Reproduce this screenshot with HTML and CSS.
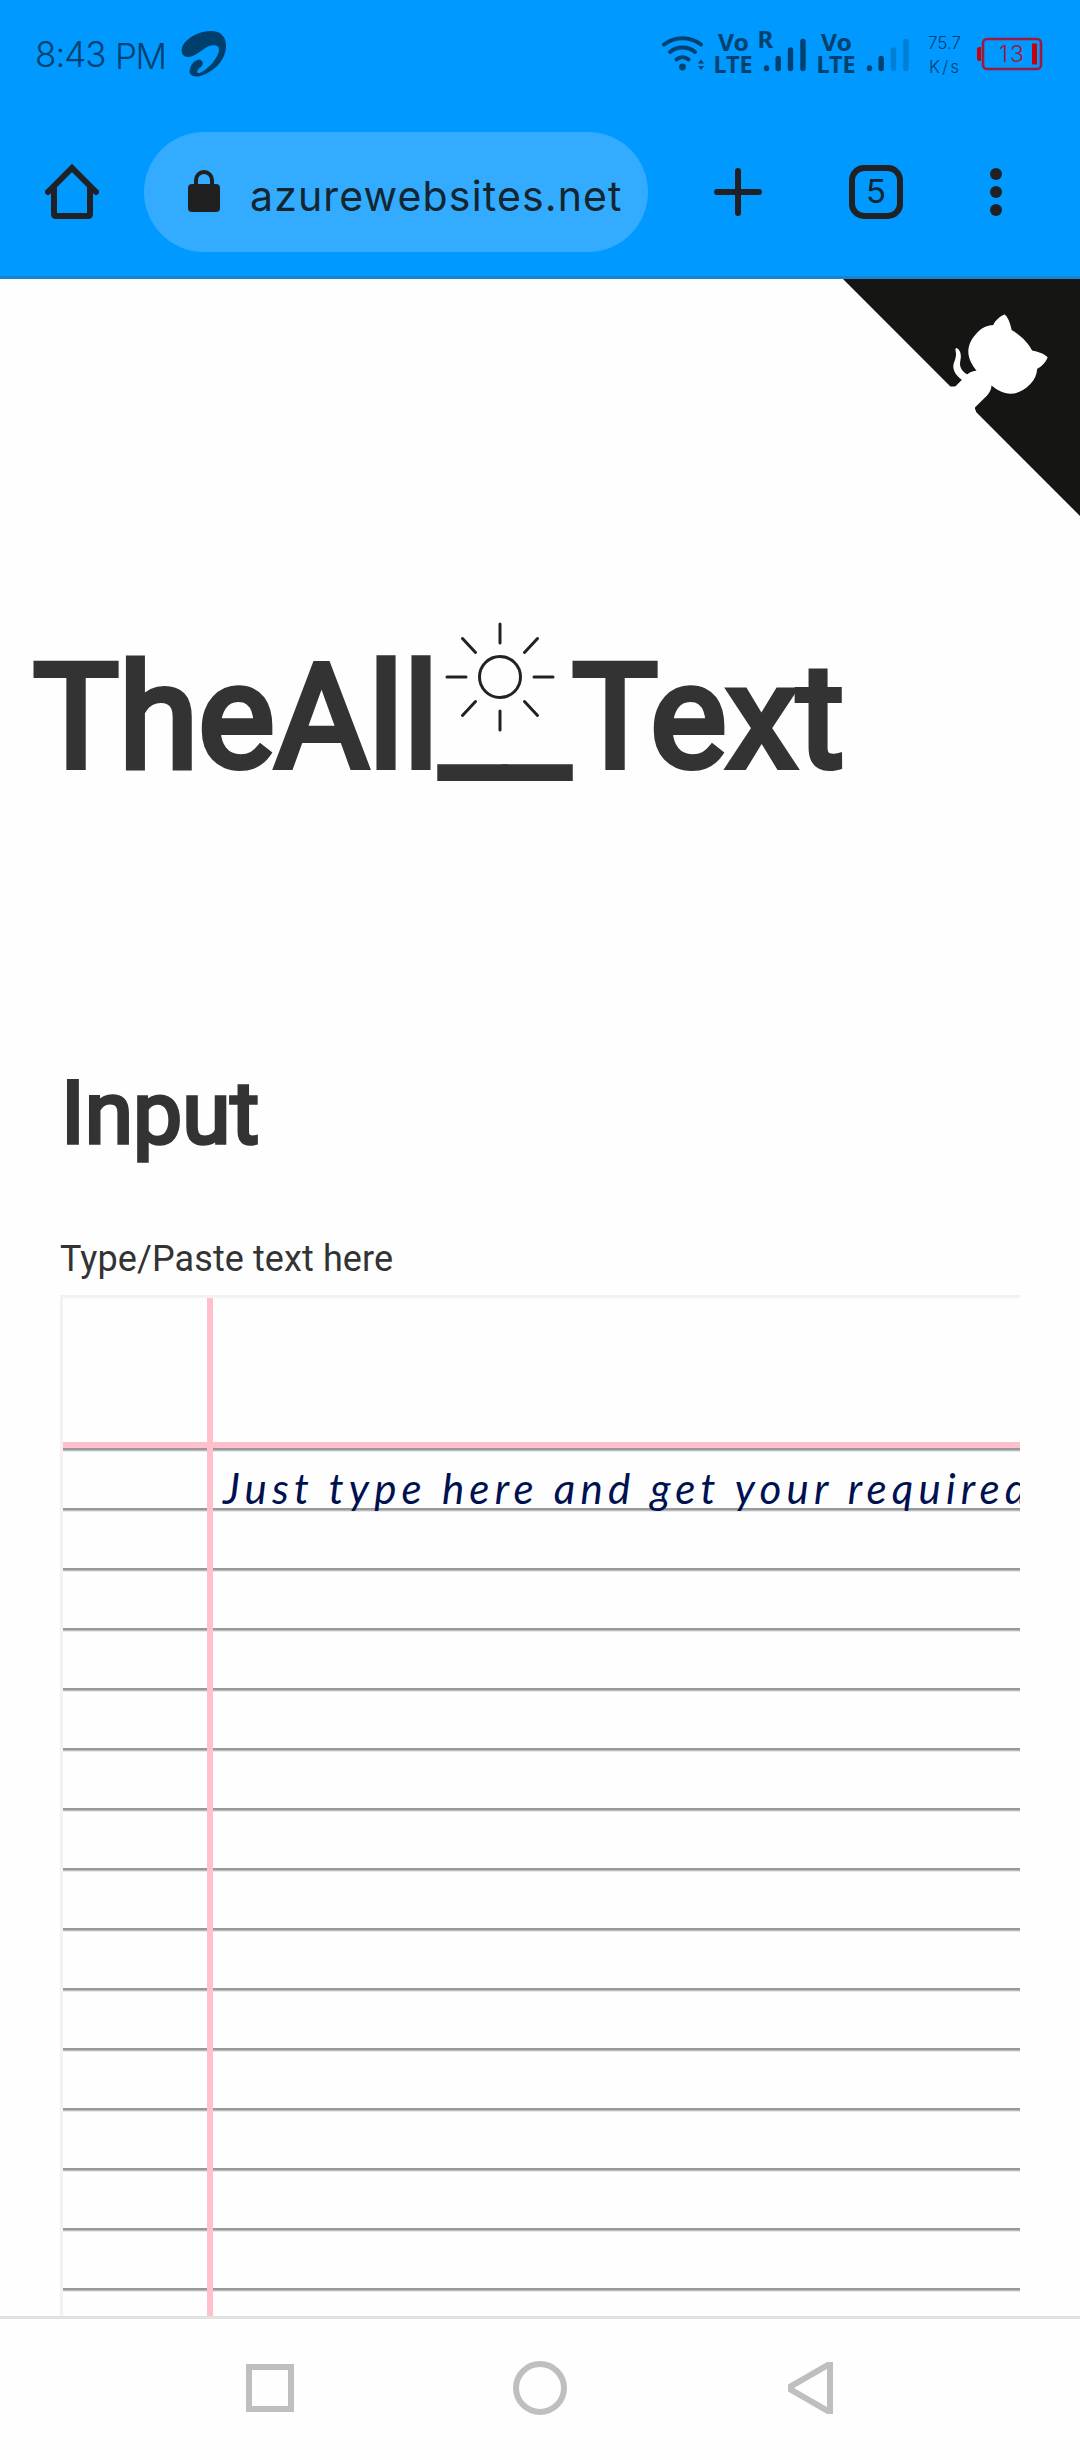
FILE: index.html
```html
<!DOCTYPE html>
<html lang="en">
<head>
<meta charset="utf-8">
<title>TheAll__Text</title>
<link rel="stylesheet" href="styles.css">
</head>
<body>
<div class="phone">
  <header class="top">
    <div class="status">
      <span class="time">8:43</span><span class="meridiem">PM</span>
      <svg class="carrier" width="48" height="50" viewBox="180 30 48 50"><path d="M188 57C182 57 180 51 183 45C188 37 200 31 211 31C221 31 226 37 226 46C226 60 214 72 200 76C193 78 188 74 190 69C191 64 195 60 199 59.500C203 60 204 64 201 67C198 69 196 72 198 73C203 74 218 60 219 50C219 44 213 45 209 46C201 50 195 57 188 57Z"/></svg>
      <svg class="indicators" width="390" height="70" viewBox="660 20 390 70">
        <g class="wave">
          <path d="M664 44.500C675 36 690 36 701 44.500M670 52C677 46 688 46 695 52M676.500 59.500C680 56.500 685 56.500 688.500 59.500"/>
        </g>
        <circle cx="682.500" cy="67" r="3.400"/>
        <path d="M698 63.500L701 59.500L704 63.500ZM698 66L701 70L704 66Z"/>
        <g class="volte">
          <text x="718" y="51" textLength="31" lengthAdjust="spacingAndGlyphs">Vo</text>
          <text x="713.500" y="73" textLength="39" lengthAdjust="spacingAndGlyphs">LTE</text>
          <text x="821" y="51" textLength="31" lengthAdjust="spacingAndGlyphs">Vo</text>
          <text x="816.500" y="73" textLength="39" lengthAdjust="spacingAndGlyphs">LTE</text>
          <text x="757.500" y="48">R</text>
        </g>
        <g class="bars">
          <path d="M766.500 68v.5M778.200 58.500v10M790.500 50v18.500M803 41.500v27M869.500 68v.5M881.200 58.500v10"/>
          <path class="weak" d="M893.500 50v18.500M906 41.500v27"/>
        </g>
        <g class="rate">
          <text x="928" y="49" textLength="33">75.7</text>
          <text x="929" y="73" textLength="30">K/s</text>
        </g>
        <rect class="cell" x="983" y="39" width="58" height="30" rx="4"/>
        <path class="charge" d="M981 47h-1.500q-2.500 0-2.500 2.500v9q0 2.500 2.500 2.500h1.500ZM1032 43.500h5v21h-5Z"/>
        <text class="level" x="999" y="62" textLength="25">13</text>
      </svg>
    </div>
    <div class="toolbar">
      <svg class="home" width="54" height="56" viewBox="45 164 54 56"><path d="M48 192L72 168L96 192M54 188V214q0 2 2 2H88q2 0 2-2V188"/></svg>
      <div class="address">
        <svg width="32" height="42" viewBox="0 0 32 42"><rect y="14" width="32" height="28" rx="4"/><path d="M8 16V10a8 8 0 0 1 16 0V16"/></svg>
        <span>azurewebsites.net</span>
      </div>
      <svg class="plus" width="48" height="48" viewBox="0 0 48 48"><path d="M24 3V45M3 24H45"/></svg>
      <div class="tabs">5</div>
      <svg class="more" width="12" height="48" viewBox="0 0 12 48"><circle cx="6" cy="6" r="6"/><circle cx="6" cy="24" r="6"/><circle cx="6" cy="42" r="6"/></svg>
    </div>
  </header>
  <main class="page">
    <svg class="corner" width="240" height="240" viewBox="0 0 250 250"><path fill="#151513" d="M0,0 L115,115 L130,115 L142,142 L250,250 L250,0 Z"/><path fill="#fff" d="M128.300,109.000 C113.800,99.700 119.000,89.600 119.000,89.600 C122.000,82.700 120.500,78.600 120.500,78.600 C119.200,72.000 123.400,76.300 123.400,76.300 C127.300,80.900 125.500,87.300 125.500,87.300 C122.900,97.600 130.600,101.900 134.400,103.200"/><path fill="#fff" d="M115.000,115.000 C114.900,115.100 118.700,116.500 119.800,115.400 L133.700,101.600 C136.900,99.200 139.900,98.400 142.200,98.600 C133.800,88.000 127.500,74.400 143.800,58.000 C148.500,53.400 154.000,51.200 159.700,51.000 C160.300,49.400 163.200,43.600 171.400,40.100 C171.400,40.100 176.100,42.500 178.800,56.200 C183.100,58.600 187.200,61.800 190.900,65.400 C194.500,69.000 197.700,73.200 200.100,77.600 C213.800,80.200 216.300,84.900 216.300,84.900 C212.700,93.100 206.900,96.000 205.400,96.600 C205.100,102.400 203.000,107.800 198.300,112.500 C181.900,128.900 168.300,122.500 157.700,114.100 C157.900,116.900 156.700,120.900 152.700,124.900 L141.000,136.500 C139.800,137.700 141.600,141.900 141.800,141.800 Z"/></svg>
    <h1 class="title"><span class="first">TheAll</span><span class="gap">__<svg class="sun" width="112" height="112" viewBox="-56 -56 112 112"><circle r="20.500"/><path d="M0-34V-53M0 34V53M-34 0H-53M34 0H53M-24.500-24.500L-37.500-38.500M24.500-24.500L37.500-38.500M-24.500 24.500L-37.500 38.500M24.500 24.500L37.500 38.500"/></svg></span><span class="second">Text</span></h1>
    <section class="input">
      <h2>Input</h2>
      <label>Type/Paste text here</label>
      <div class="paper"><p>Just type here and get your required</p></div>
    </section>
  </main>
  <nav class="nav">
    <svg width="54" height="54" viewBox="-27 -27 54 54"><path d="M-21-21H21V21H-21Z"/></svg>
    <svg width="54" height="54" viewBox="-27 -27 54 54"><circle r="24"/></svg>
    <svg class="back" width="54" height="54" viewBox="-27 -27 54 54"><path d="M17-26H23V26H17L-22 3.500V-3.500ZM17-19L-16 0L17 19Z"/></svg>
  </nav>
</div>
</body>
</html>
```
FILE: styles.css
```css
* { box-sizing: border-box; }
body { margin: 0; background: #fefefe; color: #333; font-family: Roboto, sans-serif; }
svg { display: block; flex: none; }
h1, h2, p { margin: 0; }
.phone { width: 1080px; height: 2460px; display: flex; flex-direction: column; overflow: hidden; }

.top { height: 279px; flex: none; background: #09f; border-bottom: 3px solid #1683d3; position: relative; z-index: 1; }
.status { height: 110px; padding: 20px 30px 0 35px; display: flex; align-items: flex-start; color: #00416f; font-family: Inter, sans-serif; font-weight: 300; }
.time, .meridiem { font-size: 35px; line-height: 48px; margin-top: 10px; }
.time { width: 80px; letter-spacing: -1px; }
.meridiem { width: 65px; padding-top: 2px; letter-spacing: -1.5px; }
.carrier { margin-top: 10px; fill: #003f6b; }
.indicators { margin-left: auto; fill: #00416f; }
.wave { fill: none; stroke: #00416f; stroke-width: 4; stroke-linecap: round; }
.volte { font: 700 24px "Noto Sans", sans-serif; }
.bars { stroke: #00416f; stroke-width: 5.4; stroke-linecap: round; }
.weak { stroke: #007fd6; }
.rate { font: 300 17px Inter, sans-serif; }
.cell { fill: none; stroke: #9c1b3c; stroke-width: 2.6; }
.charge { fill: #c8000a; }
.level { fill: #a51634; font: 300 23px Inter, sans-serif; }

.toolbar { height: 166px; padding: 22px 78px 24px 45px; display: flex; align-items: center; }
.home { fill: none; stroke: #202124; stroke-width: 6; stroke-linecap: round; }
.address { width: 504px; height: 120px; margin-left: 45px; padding-left: 44px; border-radius: 60px; background: #33abff; display: flex; align-items: center; color: #13262f; font: 400 41px Inter, sans-serif; }
.address svg { fill: #202020; margin-top: -2px; }
.address path { fill: none; stroke: #202020; stroke-width: 4; }
.address span { margin: 8px 0 0 30px; letter-spacing: 1.15px; }
.plus { margin-left: 66px; stroke: #202124; stroke-width: 6; stroke-linecap: round; }
.tabs { width: 54px; height: 54px; margin-left: 87px; border: 6px solid #202124; border-radius: 15px; color: #13262f; font: 400 33px/40px Inter, sans-serif; text-align: center; }
.more { margin-left: 87px; fill: #202124; }

.page { height: 2037px; flex: none; position: relative; overflow: hidden; }
.corner { position: absolute; top: -3px; right: 0; }
.title { display: flex; padding: 332px 0 0 33px; height: 760px; font-weight: 400; font-size: 144px; line-height: 214px; white-space: nowrap; -webkit-text-stroke: 6px #333; }
.first { width: 407px; }
.gap { width: 132px; position: relative; }
.sun { position: absolute; left: 4px; top: 10px; fill: none; stroke: #222; stroke-width: 3; stroke-linecap: round; }
.second { letter-spacing: -.6px; }
.input { padding: 0 60px; }
.input h2 { height: 180px; padding: 4px 0 0 1px; font-weight: 400; font-size: 87.5px; line-height: 140px; -webkit-text-stroke: 3.6px #333; }
.input label { display: block; height: 76px; font-size: 36px; line-height: 80px; letter-spacing: .1px; }
.paper { height: 1100px; border: 3px solid #f2f2f2; border-right: 0; padding: 150px 0 0 160px; position: relative; overflow: hidden;
  background:
    linear-gradient(pink, pink) 144px 0 / 6px 100% no-repeat,
    linear-gradient(pink, pink) 0 144px / 100% 6px no-repeat,
    repeating-linear-gradient(#999 0 2px, #bbb 2px 3px, #e8e8e8 3px 4px, transparent 4px 60px) 0 150px / 100% 1000px no-repeat; }
.paper p { color: #001152; font: italic 400 42px/80px Lato, sans-serif; letter-spacing: 5.2px; white-space: nowrap; }

.nav { height: 144px; flex: none; padding: 42px 243px 0; border-top: 3px solid #e0e2df; display: flex; justify-content: space-between; fill: none; stroke: #bfbfbf; stroke-width: 6; }
.back { fill: #bfbfbf; fill-rule: evenodd; stroke: none; }
```
